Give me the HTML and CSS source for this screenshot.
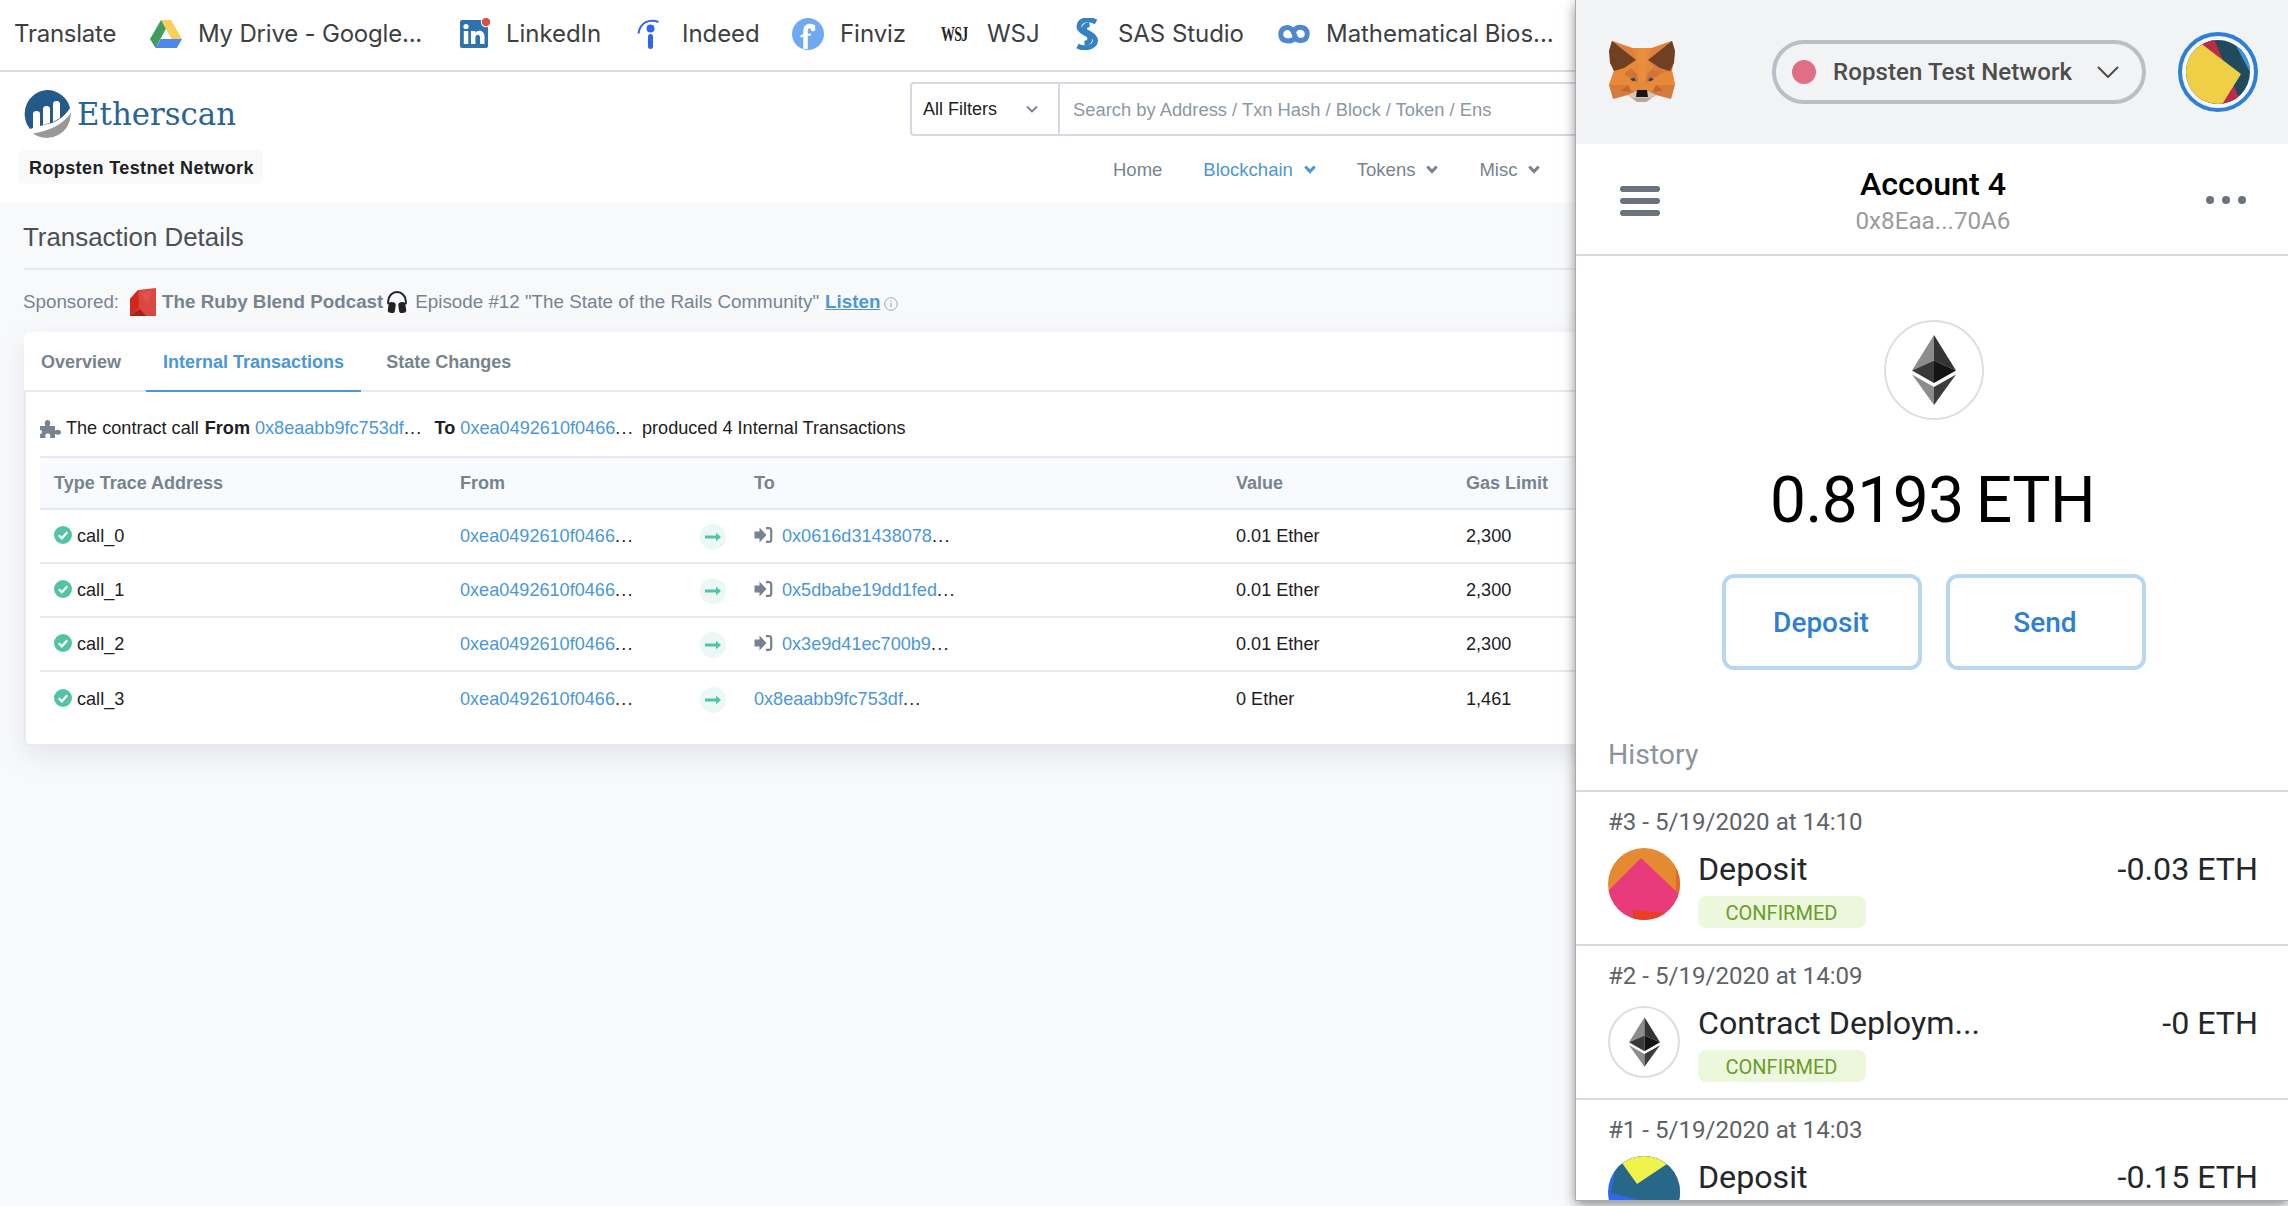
FILE: index.html
```html
<!DOCTYPE html>
<html lang="en">
<head>
<meta charset="utf-8">
<title>Transaction Details</title>
<link rel="stylesheet" href="styles.css">
</head>
<body>
<svg class="defs" width="0" height="0" aria-hidden="true">
  <symbol id="chev" viewBox="0 0 12 9"><path d="M1.300 1.500 6 6.500l4.700-5" fill="none" stroke="currentColor" stroke-width="3"/></symbol>
  <symbol id="check" viewBox="0 0 18 18"><circle cx="9" cy="9" r="9" fill="#54c3a4"/><path d="M4.800 9.300 7.800 12.300 13.300 6.300" fill="none" stroke="#fff" stroke-width="2.200"/></symbol>
  <symbol id="arrow" viewBox="0 0 26 26"><circle cx="13" cy="13" r="13" fill="#ebf8f5"/><path d="M5 11.500h11V8.700l5 4.300-5 4.300v-2.800H5z" fill="#4ec5a5"/></symbol>
  <symbol id="signin" viewBox="0 0 18 18"><path d="M0 5.500h5V1.500L12 9l-7 7.500v-4H0z" fill="#77838f"/><path d="M11.500 2.200h3.200a2 2 0 0 1 2 2v9.600a2 2 0 0 1-2 2h-3.200" fill="none" stroke="#77838f" stroke-width="2.200"/></symbol>
  <symbol id="eth" viewBox="0 0 44 70"><path d="M22 0 0 35.500 22 25.600z" fill="#8c8c8c"/><path d="M22 0v25.600l22 9.900z" fill="#343434"/><path d="M0 35.500 22 48V25.600z" fill="#393939"/><path d="M22 25.600V48l22-12.500z" fill="#141414"/><path d="M0 39.500 22 70V52z" fill="#8c8c8c"/><path d="M22 52v18l22-30.500z" fill="#3c3c3b"/></symbol>
</svg>

<nav class="bookmarks">
  <a class="bm bm-first">Translate</a>
  <a class="bm bm-drive"><svg viewBox="0 0 32 32"><path d="M11 2h10l11 19H21.500z" fill="#f8cf5c"/><path d="M11 2 0 21l5.500 9L16 11z" fill="#459b5d"/><path d="M10.700 21H32l-5.200 9H5.500z" fill="#4f86ec"/><path d="M16 11.500 10.700 21h10.800z" fill="#fff"/></svg>My Drive - Google...</a>
  <a class="bm"><svg viewBox="0 0 32 32"><rect x="2" y="2" width="28" height="28" rx="2" fill="#2d73ae"/><circle cx="8" cy="8.500" r="2.600" fill="#fff"/><path d="M5.800 13h4.500v13H5.800zM13 13h4.300v1.800c2.500-3.400 9.200-2.600 9.200 3.700V26H22v-6.500c0-4-4.600-3.600-4.600 0V26H13z" fill="#fff"/><circle cx="28" cy="4" r="5.200" fill="#fff"/><circle cx="28" cy="4" r="4.200" fill="#dc4f43"/></svg>LinkedIn</a>
  <a class="bm"><svg viewBox="0 0 32 32"><path d="M4.500 15.500C6 4 16 .500 24.500 4" fill="none" stroke="#2f66ee" stroke-width="2"/><circle cx="16.500" cy="10.500" r="4" fill="#2f66ee"/><rect x="14" y="16" width="5" height="15" rx="2.500" fill="#2f66ee"/></svg>Indeed</a>
  <a class="bm"><svg viewBox="0 0 32 32"><circle cx="16" cy="16" r="16" fill="#70a9f0"/><path d="M22 9.500c-2-2-8-3-8.500 3V31" fill="none" stroke="#fff" stroke-width="4.500"/><circle cx="21" cy="11" r="2.400" fill="#fff"/><path d="M8.500 19q2-2.500 10.500-2.500" fill="none" stroke="#fff" stroke-width="2"/></svg>Finviz</a>
  <a class="bm"><span class="wsj">WSJ</span>WSJ</a>
  <a class="bm"><svg viewBox="0 0 32 32"><path d="M26 4C18-.500 9.500 2 9 8.500c0 6 8.500 6.500 10.500 10 1.500 4-1.500 6.500-5 7" fill="none" stroke="#3482c3" stroke-width="5"/><path d="M7.500 28C15 32 25 29 25.500 22.500c0-6-8-7-10.500-10-1.500-3 0-5.500 4.500-6" fill="none" stroke="#3482c3" stroke-width="5"/></svg>SAS Studio</a>
  <a class="bm"><svg viewBox="0 0 32 32"><path d="M17.500 19.500C14 24.500 2.800 24.500 2.800 16.200c0-7.800 10-8.500 12-3.200l2.700 6.300c2.500 5 11.700 4 11.700-3.300 0-7.500-10-8.800-13.200-3" fill="none" stroke="#5089cb" stroke-width="5"/></svg>Mathematical Bios...</a>
</nav>

<header class="site-header">
  <div class="brand">
    <svg class="logo" viewBox="0 0 214 48">
      <path d="M24 0a24 24 0 0 1 23 18C42 26 36 30 29 33l-16 4-6 2A24 24 0 0 1 24 0z" fill="#235a8a"/>
      <path d="M10 39V24q0-3 3.500-3t3.500 3v12M20 35V19q0-3 3.500-3t3.500 3v14M30 32V14q0-3 3.500-3t3.500 3v14" fill="#fff"/>
      <path d="M47.800 23A24 24 0 0 1 10 43.500C27 41 40 34 47.800 23z" fill="#9a9896"/>
      <text x="54" y="34.500" class="logo-text" textLength="159" lengthAdjust="spacingAndGlyphs">Etherscan</text>
    </svg>
    <div class="net-badge">Ropsten Testnet Network</div>
  </div>
  <div class="header-right">
    <div class="search">
      <div class="filters">All Filters<svg class="thin-chev" viewBox="0 0 12 8"><path d="M1 1.500 6 6.500l5-5" fill="none" stroke="#77838f" stroke-width="1.800"/></svg></div>
      <div class="query">Search by Address / Txn Hash / Block / Token / Ens</div>
    </div>
    <nav class="menu">
      <a>Home</a>
      <a class="active">Blockchain<svg><use href="#chev"/></svg></a>
      <a>Tokens<svg><use href="#chev"/></svg></a>
      <a>Misc<svg><use href="#chev"/></svg></a>
    </nav>
  </div>
</header>

<main class="content">
  <h1>Transaction Details</h1>
  <div class="sponsor">
    <span>Sponsored:</span>
    <svg class="ruby" viewBox="0 0 26 28"><path d="M8 2 26 0v28H0V11z" fill="#da4640"/><path d="M8 2 0 11v17l9-8z" fill="#d0281f"/><path d="M0 28l10-7 6 7z" fill="#a8201b"/><path d="M10 5l12-3-4 14z" fill="#dd534d"/></svg>
    <b>The Ruby Blend Podcast</b>
    <svg class="phones" viewBox="0 0 20 20"><path d="M2 12V9a8 8 0 0 1 16 0v3" fill="none" stroke="#222" stroke-width="1.800"/><rect x="2" y="10" width="6.500" height="10" rx="2.500" fill="#222" transform="rotate(8 5 15)"/><rect x="11.500" y="10" width="6.500" height="10" rx="2.500" fill="#222" transform="rotate(-8 15 15)"/></svg>
    <span>Episode #12 "The State of the Rails Community"</span>
    <a class="listen">Listen</a>
    <svg class="info" viewBox="0 0 14 14"><circle cx="7" cy="7" r="6.300" fill="none" stroke="#a0a7af"/><path d="M7 3.500v1.300M7 6v4.500" stroke="#a0a7af" stroke-width="1.200"/></svg>
  </div>

  <section class="card">
    <div class="tabs">
      <a class="tab">Overview</a>
      <a class="tab active">Internal Transactions</a>
      <a class="tab">State Changes</a>
    </div>
    <div class="card-body">
      <p class="summary"><svg class="puzzle" viewBox="0 0 21 18"><path d="M0 6h5.500C4 3 5 0 7.500 0s3.700 3 2 6H15v4.500c3-1.500 6-.8 6 1.800s-3 3.200-6 1.700V18H9.800c1.500-3 0-4.500-2-4.500s-3.300 1.500-2 4.500H0v-4c2.500 0 3-4 0-4z" fill="#77838f"/></svg><span>The contract call</span><b>From</b><span><a>0x8eaabb9fc753df</a><i>...</i></span><b class="to">To</b><span class="to-addr"><a>0xea0492610f0466</a><i>...</i></span><span>produced 4 Internal Transactions</span></p>
      <div class="grid head"><b>Type Trace Address</b><b>From</b><b></b><b>To</b><b>Value</b><b>Gas Limit</b></div>
      <div class="grid"><span class="call"><svg><use href="#check"/></svg>call_0</span><span><a>0xea0492610f0466</a><i>...</i></span><svg class="arr"><use href="#arrow"/></svg><span class="dest"><svg><use href="#signin"/></svg><span><a>0x0616d31438078</a><i>...</i></span></span><span>0.01 Ether</span><span>2,300</span></div>
      <div class="grid"><span class="call"><svg><use href="#check"/></svg>call_1</span><span><a>0xea0492610f0466</a><i>...</i></span><svg class="arr"><use href="#arrow"/></svg><span class="dest"><svg><use href="#signin"/></svg><span><a>0x5dbabe19dd1fed</a><i>...</i></span></span><span>0.01 Ether</span><span>2,300</span></div>
      <div class="grid"><span class="call"><svg><use href="#check"/></svg>call_2</span><span><a>0xea0492610f0466</a><i>...</i></span><svg class="arr"><use href="#arrow"/></svg><span class="dest"><svg><use href="#signin"/></svg><span><a>0x3e9d41ec700b9</a><i>...</i></span></span><span>0.01 Ether</span><span>2,300</span></div>
      <div class="grid"><span class="call"><svg><use href="#check"/></svg>call_3</span><span><a>0xea0492610f0466</a><i>...</i></span><svg class="arr"><use href="#arrow"/></svg><span class="dest"><span><a>0x8eaabb9fc753df</a><i>...</i></span></span><span>0 Ether</span><span>1,461</span></div>
    </div>
  </section>
</main>

<aside class="wallet">
  <div class="w-top">
    <svg class="fox" viewBox="0 0 66 62">
      <path d="M3 0 23 7h20L63 0l3 10-3 20 3 14-4 14-15-4-10 7H28l-9-7-15 4L0 44l5-14L0 10z" fill="#d67b3c"/>
      <path d="M23 7h20l-4 12 11 14 13-3 3 14H47l-4 6H23l-4-6H0l5-14 10-3 12-8z" fill="#e68a3a"/>
      <path d="M23 7 27 19 3 0zM43 7l-4 12L63 0z" fill="#e0803c"/>
      <path d="M29 7h8l-1 34h-6z" fill="#e88e3f"/>
      <path d="M3 0 27 19 15 27 5 30 1 22 0 10zM63 0 39 19l12 8 10 3 4-8 1-12z" fill="#6f4122"/>
      <path d="M15 33l7-6 6 6 1 9zM51 33l-7-6-6 6-1 9z" fill="#d2743a"/>
      <path d="M12 50l7-6 3 7zM54 50l-7-6-3 7z" fill="#c4652f"/>
      <path d="M19 54l8-4h12l8 4-10 7H28z" fill="#d3c6bc"/><path d="M24 57h18l-5 4H28z" fill="#b9a89a"/>
      <path d="M28 49h10l1 7H27z" fill="#161616"/>
      <path d="M21 38l4-1.500 2 3-3 .8zM45 38l-4-1.500-2 3 3 .8z" fill="#2a4560"/>
    </svg>
    <div class="network"><i class="net-dot"></i>Ropsten Test Network<svg viewBox="0 0 22 12"><path d="M1 1l10 10L21 1" fill="none" stroke="#4d4d4d" stroke-width="2"/></svg></div>
    <svg class="avatar" viewBox="0 0 80 80"><defs><clipPath id="av"><circle cx="40" cy="40" r="32"/></clipPath></defs><circle cx="40" cy="40" r="38" fill="#f6f7f8" stroke="#2f7fd7" stroke-width="4"/><g clip-path="url(#av)"><path d="M0 0h80v80H0z" fill="#1f4b5c"/><path d="M55 8h25v34h-7z" fill="#4290ee"/><path d="M20 0h13l34 80H20z" fill="#b92d49"/><path d="M20 8l5 5 38 29-23 37H0V8z" fill="#efcf45"/></g></svg>
  </div>
  <div class="w-account">
    <svg class="burger" viewBox="0 0 40 30"><path d="M3 3h34M3 15h34M3 27h34" stroke="#6a737d" stroke-width="6" stroke-linecap="round"/></svg>
    <div class="acct"><strong>Account 4</strong><span>0x8Eaa...70A6</span></div>
    <svg class="more" viewBox="0 0 40 8"><g fill="#6a737d"><circle cx="4" cy="4" r="4"/><circle cx="20" cy="4" r="4"/><circle cx="36" cy="4" r="4"/></g></svg>
  </div>
  <div class="w-balance">
    <div class="token"><svg><use href="#eth"/></svg></div>
    <div class="amount"><span>0.8193</span><span>ETH</span></div>
    <div class="actions"><a class="btn">Deposit</a><a class="btn">Send</a></div>
  </div>
  <h2>History</h2>
  <div class="tx">
    <div class="tx-date">#3 - 5/19/2020 at 14:10</div>
    <div class="tx-row">
      <svg class="ident" viewBox="0 0 72 72"><defs><clipPath id="c36"><circle cx="36" cy="36" r="36"/></clipPath></defs><g clip-path="url(#c36)"><path d="M0 0h72v72H0z" fill="#e48a33"/><path d="M68 20h4v30h-4z" fill="#ea6426"/><path d="M33 10 0 43v29h72V47z" fill="#e93b7b"/><path d="M25 62l34 3v10H25z" fill="#ea3d28"/></g></svg>
      <div class="tx-info">Deposit<em>CONFIRMED</em></div><span class="tx-amt">-0.03 ETH</span>
    </div>
  </div>
  <div class="tx">
    <div class="tx-date">#2 - 5/19/2020 at 14:09</div>
    <div class="tx-row">
      <div class="ident token-sm"><svg><use href="#eth"/></svg></div>
      <div class="tx-info">Contract Deploym...<em>CONFIRMED</em></div><span class="tx-amt">-0 ETH</span>
    </div>
  </div>
  <div class="tx">
    <div class="tx-date">#1 - 5/19/2020 at 14:03</div>
    <div class="tx-row">
      <svg class="ident" viewBox="0 0 72 72"><g clip-path="url(#c36)"><path d="M0 0h72v72H0z" fill="#2c6ae9"/><path d="M10 0 3 37l69 17V0z" fill="#296789"/><path d="M14 7 29 28 59 8V0H14z" fill="#eff34b"/></g></svg>
      <div class="tx-info">Deposit</div><span class="tx-amt">-0.15 ETH</span>
    </div>
  </div>
</aside>
</body>
</html>
```

FILE: styles.css
```css
* { box-sizing: border-box; }

body {
  margin: 0;
  width: 2288px;
  height: 1206px;
  overflow: hidden;
  position: relative;
  background: #f8f9fb;
  color: #1e2022;
  font: 18px/1.5 "Liberation Sans", Arial, sans-serif;
}

svg { display: block; flex: none; }
.defs { position: absolute; }
a { color: #4b97d8; }

/* Bookmarks */
.bookmarks {
  height: 72px;
  padding: 0 0 3px 15px;
  display: grid;
  grid-template-columns: 135px 308px 176px 158px 147px 131px 208px 300px;
  align-items: center;
  background: #fff;
  border-bottom: 2px solid #dadbe0;
  font: 24px/28px Inter, sans-serif;
  letter-spacing: -.05px;
}
.bm { display: flex; align-items: center; gap: 16px; color: #3c4043; white-space: nowrap; }
.bm-first { letter-spacing: -.25px; text-indent: -1px; }
.bm-drive { letter-spacing: -.2px; }
.bm svg { width: 32px; height: 32px; }
.wsj {
  width: 46px;
  margin-right: -14px;
  padding-left: 3px;
  font: bold 21px/28px "Liberation Serif", serif;
  letter-spacing: -1px;
  color: #222;
  transform: scaleX(.66);
  transform-origin: 0 50%;
}

/* Header */
.site-header {
  height: 130px;
  display: flex;
  background: #fff;
}
.brand { width: 892px; padding: 18px 0 0 18px; }
.logo { width: 214px; height: 48px; margin-left: 5px; }
.logo-text { font: 31px "DejaVu Serif", serif; fill: #2a6494; }
.net-badge {
  width: 245px;
  height: 34px;
  margin-top: 12px;
  padding-left: 11px;
  border-radius: 6px;
  background: #f8f9f9;
  font-weight: bold;
  line-height: 36px;
  letter-spacing: .4px;
}
.header-right { flex: 1; padding: 10px 0 0 18px; }
.search {
  display: flex;
  height: 54px;
  border: 2px solid #d5dae2;
  border-radius: 4px 0 0 4px;
  line-height: 52px;
}
.filters {
  width: 146px;
  padding: 0 20px 0 11px;
  display: flex;
  justify-content: space-between;
  align-items: center;
}
.thin-chev { width: 12px; height: 8px; }
.query { flex: 1; padding-left: 13px; border-left: 2px solid #d5dae2; color: #8c98a4; font-size: 18.35px; }
.menu { display: flex; padding: 20px 0 0 203px; gap: 41px; font-size: 18.5px; }
.menu a { display: flex; align-items: center; gap: 11px; color: #77838f; }
.menu a.active { color: #4b97d8; }
.menu svg { width: 12px; height: 9px; }

/* Content */
.content { padding: 0 0 0 24px; }
h1 {
  margin: 0;
  height: 68px;
  border-bottom: 2px solid #e7eaf3;
  font-size: 25.9px;
  font-weight: normal;
  line-height: 70px;
  text-indent: -1px;
  color: #4a4f55;
}
.sponsor { display: flex; align-items: center; height: 62px; padding-top: 2px; color: #77838f; font-size: 18.8px; white-space: nowrap; }
.sponsor span:first-child { margin-left: -1px; }
.ruby { width: 26px; height: 28px; margin: 0 6px 0 11px; }
.phones { width: 22px; height: 22px; margin: 0 7px 0 3px; }
.listen { margin-left: 6px; font-weight: bold; text-decoration: underline; }
.info { width: 14px; height: 14px; margin: 3px 0 0 4px; }

.card {
  height: 414px;
  border-radius: 6px 0 0 6px;
  background: #fff;
  box-shadow: 0 10px 26px rgba(140, 152, 164, .18);
}
.tabs { display: flex; gap: 8px; height: 60px; border-bottom: 2px solid #e7eaf3; }
.tab { height: 60px; padding: 0 17px; line-height: 60px; font-weight: bold; color: #77838f; }
.tab.active { color: #4b97d8; border-bottom: 2px solid #4b97d8; }
.card-body {
  height: 354px;
  padding-left: 14px;
  border: 2px solid #e7eaf3;
  border-width: 0 0 2px 2px;
  border-radius: 0 0 0 6px;
  font-size: 18.1px;
}
.card-body i { font-style: normal; letter-spacing: 1.2px; }
.summary { display: flex; align-items: center; height: 64px; margin: 0; padding-top: 10px; white-space: nowrap; }
.puzzle { width: 21px; height: 18px; margin-right: 5px; }
.summary b { margin: 0 5px 0 6px; }
.summary .to { margin-left: 12px; }
.to-addr { margin-right: 8px; }

.grid {
  display: grid;
  grid-template-columns: 406px 240px 54px 482px 230px 1fr;
  align-items: center;
  height: 54px;
  padding: 1px 0 0 14px;
  border-bottom: 2px solid #e7eaf0;
}
.grid:last-child { border-bottom: 0; }
.head { border-top: 2px solid #e7eaf3; background: #f8fafd; color: #77838f; font-size: 18px; }
.call, .dest { display: flex; align-items: center; }
.call svg { width: 18px; height: 18px; margin: -2px 5px 0 0; }
.dest svg { width: 19px; height: 18px; margin: -2px 9px 0 0; }
.arr { width: 26px; height: 26px; }

/* Wallet popup floats over the page */
.wallet {
  position: absolute;
  top: 0;
  right: 0;
  width: 712px;
  height: 1200px;
  overflow: hidden;
  background: #fff;
  font-family: Roboto, sans-serif;
  box-shadow: 0 0 0 1px #a9abae, 0 4px 12px rgba(0, 0, 0, .5);
}
.w-top { height: 144px; padding: 0 30px 0 33px; display: flex; align-items: center; background: #f2f3f4; }
.fox { width: 66px; height: 62px; }
.network {
  width: 374px;
  height: 64px;
  margin: 0 32px 0 auto;
  padding: 0 23px 0 16px;
  display: flex;
  align-items: center;
  border: 4px solid #bbbec6;
  border-radius: 32px;
  font-weight: 500;
  font-size: 24px;
  letter-spacing: .1px;
  color: #4d4d4d;
}
.net-dot { width: 24px; height: 24px; margin-right: 17px; border-radius: 50%; background: #e06e84; }
.network svg { width: 22px; height: 12px; margin-left: auto; }
.avatar { width: 80px; height: 80px; }
.w-account {
  height: 112px;
  padding: 3px 42px 0 44px;
  display: flex;
  align-items: center;
  justify-content: space-between;
  border-bottom: 2px solid #d8dae0;
}
.burger { width: 40px; height: 30px; }
.more { width: 40px; height: 8px; margin-bottom: 2px; }
.acct { display: flex; flex-direction: column; align-items: center; padding-top: 4px; font-size: 24.2px; line-height: 37px; color: #9b9b9b; }
.acct strong { font-weight: 500; font-size: 32.2px; line-height: 38px; color: #000; }
.w-balance { height: 454px; padding: 64px 0 0 4px; display: flex; flex-direction: column; align-items: center; }
.token { width: 100px; height: 100px; display: grid; place-items: center; border: 2px solid #dedede; border-radius: 50%; }
.token svg { width: 44px; height: 70px; }
.amount { display: flex; gap: 12px; margin: 41px 3px 0 0; height: 80px; font-size: 64px; letter-spacing: -.5px; line-height: 80px; color: #000; }
.actions { display: flex; gap: 24px; margin-top: 33px; }
.btn {
  width: 200px;
  height: 96px;
  padding-right: 2px;
  border: 4px solid #b9d7f0;
  border-radius: 12px;
  text-align: center;
  font-weight: 500;
  font-size: 28px;
  line-height: 89px;
  color: #2f7fd5;
}
h2 { margin: 0; height: 82px; padding: 26px 32px 0; border-bottom: 2px solid #d8dae0; font-weight: normal; font-size: 28.4px; line-height: 38px; color: #8a949e; }
.tx { height: 154px; padding: 14px 30px 0 32px; border-bottom: 2px solid #d8dae0; }
.tx-date { height: 34px; line-height: 32px; font-size: 24.1px; color: #5f6368; }
.tx-row { display: flex; align-items: flex-start; padding-top: 8px; font-size: 32.2px; line-height: 42px; color: #24272a; }
.ident { width: 72px; height: 72px; margin-right: 18px; }
.token-sm { margin-top: 4px; display: grid; place-items: center; border: 2px solid #dedede; border-radius: 50%; }
.token-sm svg { width: 31px; height: 50px; }
.tx-info { display: flex; flex-direction: column; }
.tx-info em {
  width: 168px;
  height: 32px;
  margin-top: 6px;
  padding-right: 1px;
  border-radius: 8px;
  background: #ecf7dc;
  font-style: normal;
  font-size: 20px;
  line-height: 34px;
  text-align: center;
  color: #6b9c2c;
}
.tx-amt { margin-left: auto; }
```
